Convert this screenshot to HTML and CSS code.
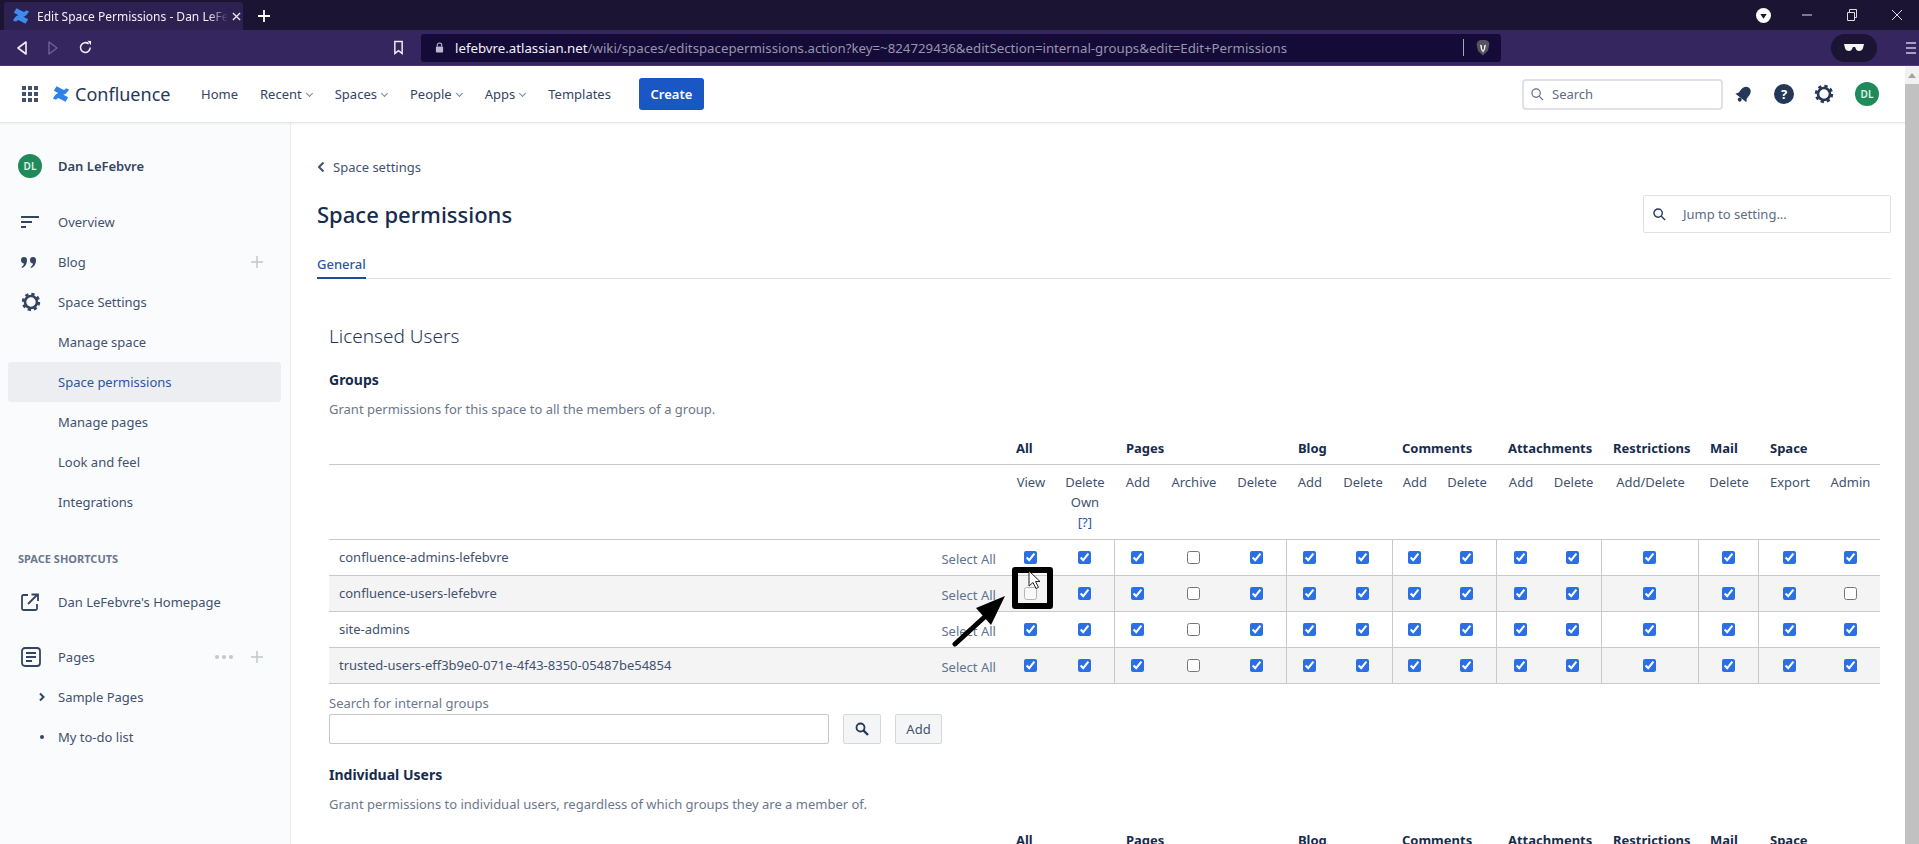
FILE: index.html
```html
<!DOCTYPE html>
<html lang="en">

<head>
    <meta charset="UTF-8">
    <title>Edit Space Permissions - Dan LeFebvre - Confluence</title>
    <link rel="stylesheet" href="styles.css">
</head>

<body>
    <!-- browser chrome -->
    <div class="tabstrip">
        <div class="tab">
            <svg class="tab-logo" viewBox="0 0 20 20" width="18" height="18"><path fill="#3d8bf0" d="M1 15c3-5 6-7 9-5.500l8 4-3 5-7-3.500c-1.500-.7-2.500-.2-3.500 1.500zM19 5c-3 5-6 7-9 5.500l-8-4 3-5 7 3.500c1.500.7 2.500.2 3.500-1.500z"/></svg>
            <span class="tab-title">Edit Space Permissions - Dan LeFe</span>
            <svg class="tab-close" viewBox="0 0 10 10" width="9" height="9"><path d="M1 1l8 8M9 1l-8 8" stroke="#e8e6ee" stroke-width="1.500"/></svg>
        </div>
        <svg class="new-tab" viewBox="0 0 12 12" width="12" height="12"><path d="M6 0v12M0 6h12" stroke="#fff" stroke-width="1.800"/></svg>
        <svg class="win-menu" viewBox="0 0 14 14" width="15" height="15"><circle cx="7" cy="7" r="7" fill="#fff"/><path d="M4 5.500h6L7 10z" fill="#1b1433"/></svg>
        <svg class="win-btn" viewBox="0 0 12 12" width="12" height="12"><path d="M1 6h10" stroke="#ddd" stroke-width="1"/></svg>
        <svg class="win-btn" viewBox="0 0 12 12" width="12" height="12"><path d="M1.500 3.500h7v8h-7zM3.500 3V.5h7v8H9" fill="none" stroke="#ddd" stroke-width="1"/></svg>
        <svg class="win-btn" viewBox="0 0 12 12" width="12" height="12"><path d="M1 1l10 10M11 1L1 11" stroke="#ddd" stroke-width="1"/></svg>
    </div>
    <div class="toolbar">
        <svg class="tool-btn" viewBox="0 0 12 16" width="12" height="16"><path d="M10 2L2 8l8 6z" fill="none" stroke="#f0eef6" stroke-width="1.600" stroke-linejoin="round"/></svg>
        <svg class="tool-btn dim" viewBox="0 0 12 16" width="12" height="16"><path d="M2 2l8 6-8 6z" fill="none" stroke="#6f6494" stroke-width="1.400" stroke-linejoin="round"/></svg>
        <svg class="tool-btn" viewBox="0 0 16 16" width="15" height="15"><path d="M13 8a5.200 5.200 0 1 1-1.700-3.800" fill="none" stroke="#f0eef6" stroke-width="1.700"/><path d="M10 .8l4 .2-.2 4.500z" fill="#f0eef6"/></svg>
        <svg class="bookmark" viewBox="0 0 12 16" width="11" height="15"><path d="M2 1.500h8v13l-4-3-4 3z" fill="none" stroke="#f0eef6" stroke-width="1.600"/></svg>
        <div class="urlbar">
            <svg viewBox="0 0 10 12" width="9" height="11"><path d="M2.500 5V3.500a2.500 2.500 0 0 1 5 0V5" fill="none" stroke="#bdb8cc" stroke-width="1.200"/><rect x="1" y="5" width="8" height="6.500" rx="1" fill="#bdb8cc"/></svg>
            <span class="url"><b>lefebvre.atlassian.net</b>/wiki/spaces/editspacepermissions.action?key=~824729436&amp;editSection=internal-groups&amp;edit=Edit+Permissions</span>
            <i class="url-sep"></i>
            <svg viewBox="0 0 14 16" width="14" height="17"><path d="M2 1.500L4.500.5h5l2.500 1 1.500 2.500-1.500 7L7 16l-5-4.500-1.500-7z" fill="#56535f"/><path d="M4 5l2 1v3L7 11l1-2V6l2-1-1 5-2 3-2-3z" fill="#f1eff6"/></svg>
        </div>
        <div class="private-pill">
            <svg viewBox="0 0 22 10" width="22" height="10"><path d="M1 1h20l-1 4c-.6 3-4.500 4-6.500 2L12 4h-2L8.500 7c-2 2-6 1-6.500-2z" fill="#f5f5f7"/></svg>
        </div>
        <svg class="menu-btn" viewBox="0 0 12 14" width="12" height="14"><path d="M1 2h10M1 7h10M1 12h10" stroke="#cfc8e4" stroke-width="1.700"/></svg>
    </div>

    <div class="page">
        <div class="content-wrap">
            <!-- confluence top bar -->
            <header class="topnav">
                <svg class="app-grid" viewBox="0 0 16 16" width="16" height="16"><g fill="#42526e"><rect width="4" height="4"/><rect x="6" width="4" height="4"/><rect x="12" width="4" height="4"/><rect y="6" width="4" height="4"/><rect x="6" y="6" width="4" height="4"/><rect x="12" y="6" width="4" height="4"/><rect y="12" width="4" height="4"/><rect x="6" y="12" width="4" height="4"/><rect x="12" y="12" width="4" height="4"/></g></svg>
                <svg class="logo" viewBox="0 0 20 20" width="18" height="18"><path fill="#2f80e8" d="M1 15c3-5 6-7 9-5.500l8 4-3 5-7-3.500c-1.500-.7-2.500-.2-3.500 1.500zM19 5c-3 5-6 7-9 5.500l-8-4 3-5 7 3.500c1.500.7 2.500.2 3.500-1.500z"/></svg>
                <span class="brand">Confluence</span>
                <nav class="nav-links">
                    <a>Home</a>
                    <a>Recent <i class="caret"></i></a>
                    <a>Spaces <i class="caret"></i></a>
                    <a>People <i class="caret"></i></a>
                    <a>Apps <i class="caret"></i></a>
                    <a>Templates</a>
                </nav>
                <button class="create-btn">Create</button>
                <div class="top-search">
                    <svg viewBox="0 0 14 14" width="13" height="13"><circle cx="5.500" cy="5.500" r="4.500" fill="none" stroke="#5e6c84" stroke-width="1.300"/><path d="M9 9l4 4" stroke="#5e6c84" stroke-width="1.300"/></svg>
                    <span>Search</span>
                </div>
                <svg class="top-icon bell" viewBox="0 0 18 18" width="18" height="18"><g transform="rotate(38 9 9)" fill="#253858"><path d="M9 1C6 1 4 3.500 4 7v4l-2 3h14l-2-3V7c0-3.500-2-6-5-6z"/><circle cx="9" cy="16" r="2"/></g></svg>
                <span class="top-icon help">?</span>
                <svg class="top-icon" viewBox="0 0 20 20" width="20" height="20"><circle cx="10" cy="10" r="6" fill="none" stroke="#253858" stroke-width="2.600"/><circle cx="10" cy="10" r="8" fill="none" stroke="#253858" stroke-width="2.400" stroke-dasharray="3.300 3"/></svg>
                <span class="avatar">DL</span>
            </header>

            <div class="columns">
                <aside class="sidebar">
                    <div class="space-head">
                        <span class="avatar">DL</span>
                        <span>Dan LeFebvre</span>
                    </div>
                    <ul class="side-nav">
                        <li class="first">
                            <svg viewBox="0 0 18 12" width="18" height="12"><path d="M0 1h18M0 6h11M0 11h5" stroke="#344563" stroke-width="2"/></svg>
                            Overview
                        </li>
                        <li>
                            <svg viewBox="0 0 16 12" width="16" height="13"><path fill="#344563" d="M0 3.500a3 3 0 1 1 6 0c0 4-2 7-5 8l-.5-1c1.500-1 2.300-2 2.500-3.500-1.800 0-3-1.500-3-3.500zM9 3.500a3 3 0 1 1 6 0c0 4-2 7-5 8l-.5-1c1.500-1 2.300-2 2.500-3.500-1.800 0-3-1.500-3-3.500z"/></svg>
                            Blog
                            <svg class="side-plus" viewBox="0 0 12 12" width="12" height="12"><path d="M6 0v12M0 6h12" stroke="#c1c7d0" stroke-width="1.500"/></svg>
                        </li>
                        <li>
                            <svg viewBox="0 0 20 20" width="20" height="20"><circle cx="10" cy="10" r="6" fill="none" stroke="#344563" stroke-width="2.600"/><circle cx="10" cy="10" r="8" fill="none" stroke="#344563" stroke-width="2.400" stroke-dasharray="3.300 3"/></svg>
                            Space Settings
                        </li>
                        <li>Manage space</li>
                        <li class="current">Space permissions</li>
                        <li>Manage pages</li>
                        <li>Look and feel</li>
                        <li>Integrations</li>
                    </ul>
                    <h4 class="side-title">SPACE SHORTCUTS</h4>
                    <ul class="side-nav">
                        <li>
                            <svg viewBox="0 0 18 18" width="18" height="18"><path d="M7 2H2.500A1.500 1.500 0 0 0 1 3.500v12A1.500 1.500 0 0 0 2.500 17h12a1.500 1.500 0 0 0 1.500-1.500V11" fill="none" stroke="#344563" stroke-width="1.800"/><path d="M7 11l9-9M10.500 1.500H17V8" fill="none" stroke="#344563" stroke-width="1.800"/></svg>
                            Dan LeFebvre's Homepage
                        </li>
                        <li class="pages">
                            <svg viewBox="0 0 20 20" width="20" height="20"><rect x="1" y="1" width="18" height="18" rx="3" fill="none" stroke="#344563" stroke-width="1.800"/><path d="M5 6h10M5 10h10M5 14h6" stroke="#344563" stroke-width="1.800"/></svg>
                            Pages
                            <span class="side-dots"><i></i><i></i><i></i></span>
                            <svg class="side-plus" viewBox="0 0 12 12" width="12" height="12"><path d="M6 0v12M0 6h12" stroke="#c1c7d0" stroke-width="1.500"/></svg>
                        </li>
                        <li>
                            <svg class="tree-mark" viewBox="0 0 8 10" width="8" height="10"><path d="M2 1.500L5.500 5 2 8.500" fill="none" stroke="#344563" stroke-width="2"/></svg>
                            Sample Pages
                        </li>
                        <li>
                            <svg class="tree-mark" viewBox="0 0 8 10" width="8" height="10"><circle cx="4" cy="5" r="2" fill="#344563"/></svg>
                            My to-do list
                        </li>
                    </ul>
                </aside>

                <main class="main">
                    <div class="crumb">
                        <svg viewBox="0 0 8 12" width="8" height="12"><path d="M6.500 1.500L2 6l4.500 4.500" fill="none" stroke="#42526e" stroke-width="2"/></svg>
                        Space settings
                    </div>
                    <div class="title-row">
                        <h1>Space permissions</h1>
                        <div class="jump">
                            <svg viewBox="0 0 14 14" width="13" height="13"><circle cx="5.500" cy="5.500" r="4.500" fill="none" stroke="#253858" stroke-width="1.500"/><path d="M9 9l4 4" stroke="#253858" stroke-width="1.500"/></svg>
                            <span>Jump to setting...</span>
                        </div>
                    </div>
                    <div class="tabs"><span class="tab-link">General</span></div>

                    <section class="perms">
                        <h2>Licensed Users</h2>
                        <h3>Groups</h3>
                        <p class="hint">Grant permissions for this space to all the members of a group.</p>

                        <table class="perm-table">
                            <colgroup>
                                <col class="c-name"><col class="c-select">
                                <col class="w48"><col class="w60">
                                <col class="w46"><col class="w66"><col class="w60">
                                <col class="w46"><col class="w60">
                                <col class="w44"><col class="w60">
                                <col class="w48"><col class="w57">
                                <col class="w97">
                                <col class="w60">
                                <col class="w62"><col class="w59">
                            </colgroup>
                            <thead>
                                <tr class="group-row">
                                    <th colspan="2"></th>
                                    <th colspan="2" class="g-all">All</th>
                                    <th colspan="3">Pages</th>
                                    <th colspan="2">Blog</th>
                                    <th colspan="2" class="g-comments">Comments</th>
                                    <th colspan="2">Attachments</th>
                                    <th>Restrictions</th>
                                    <th>Mail</th>
                                    <th colspan="2">Space</th>
                                </tr>
                                <tr class="action-row">
                                    <th colspan="2"></th>
                                    <th>View</th>
                                    <th>Delete Own <a class="help-link">[?]</a></th>
                                    <th>Add</th>
                                    <th>Archive</th>
                                    <th>Delete</th>
                                    <th>Add</th>
                                    <th>Delete</th>
                                    <th>Add</th>
                                    <th>Delete</th>
                                    <th>Add</th>
                                    <th>Delete</th>
                                    <th>Add/Delete</th>
                                    <th>Delete</th>
                                    <th>Export</th>
                                    <th>Admin</th>
                                </tr>
                            </thead>
                            <tbody>
                                <tr>
                                    <td class="name">confluence-admins-lefebvre</td>
                                    <td class="select-all">Select All</td>
                                    <td><input type="checkbox" checked></td>
                                    <td class="end"><input type="checkbox" checked></td>
                                    <td><input type="checkbox" checked></td>
                                    <td><input type="checkbox"></td>
                                    <td class="end"><input type="checkbox" checked></td>
                                    <td><input type="checkbox" checked></td>
                                    <td class="end"><input type="checkbox" checked></td>
                                    <td><input type="checkbox" checked></td>
                                    <td class="end"><input type="checkbox" checked></td>
                                    <td><input type="checkbox" checked></td>
                                    <td class="end"><input type="checkbox" checked></td>
                                    <td class="end"><input type="checkbox" checked></td>
                                    <td class="end"><input type="checkbox" checked></td>
                                    <td><input type="checkbox" checked></td>
                                    <td><input type="checkbox" checked></td>
                                </tr>
                                <tr>
                                    <td class="name">confluence-users-lefebvre</td>
                                    <td class="select-all">Select All</td>
                                    <td><input class="fading" type="checkbox"></td>
                                    <td class="end"><input type="checkbox" checked></td>
                                    <td><input type="checkbox" checked></td>
                                    <td><input type="checkbox"></td>
                                    <td class="end"><input type="checkbox" checked></td>
                                    <td><input type="checkbox" checked></td>
                                    <td class="end"><input type="checkbox" checked></td>
                                    <td><input type="checkbox" checked></td>
                                    <td class="end"><input type="checkbox" checked></td>
                                    <td><input type="checkbox" checked></td>
                                    <td class="end"><input type="checkbox" checked></td>
                                    <td class="end"><input type="checkbox" checked></td>
                                    <td class="end"><input type="checkbox" checked></td>
                                    <td><input type="checkbox" checked></td>
                                    <td><input type="checkbox"></td>
                                </tr>
                                <tr>
                                    <td class="name">site-admins</td>
                                    <td class="select-all">Select All</td>
                                    <td><input type="checkbox" checked></td>
                                    <td class="end"><input type="checkbox" checked></td>
                                    <td><input type="checkbox" checked></td>
                                    <td><input type="checkbox"></td>
                                    <td class="end"><input type="checkbox" checked></td>
                                    <td><input type="checkbox" checked></td>
                                    <td class="end"><input type="checkbox" checked></td>
                                    <td><input type="checkbox" checked></td>
                                    <td class="end"><input type="checkbox" checked></td>
                                    <td><input type="checkbox" checked></td>
                                    <td class="end"><input type="checkbox" checked></td>
                                    <td class="end"><input type="checkbox" checked></td>
                                    <td class="end"><input type="checkbox" checked></td>
                                    <td><input type="checkbox" checked></td>
                                    <td><input type="checkbox" checked></td>
                                </tr>
                                <tr>
                                    <td class="name">trusted-users-eff3b9e0-071e-4f43-8350-05487be54854</td>
                                    <td class="select-all">Select All</td>
                                    <td><input type="checkbox" checked></td>
                                    <td class="end"><input type="checkbox" checked></td>
                                    <td><input type="checkbox" checked></td>
                                    <td><input type="checkbox"></td>
                                    <td class="end"><input type="checkbox" checked></td>
                                    <td><input type="checkbox" checked></td>
                                    <td class="end"><input type="checkbox" checked></td>
                                    <td><input type="checkbox" checked></td>
                                    <td class="end"><input type="checkbox" checked></td>
                                    <td><input type="checkbox" checked></td>
                                    <td class="end"><input type="checkbox" checked></td>
                                    <td class="end"><input type="checkbox" checked></td>
                                    <td class="end"><input type="checkbox" checked></td>
                                    <td><input type="checkbox" checked></td>
                                    <td><input type="checkbox" checked></td>
                                </tr>
                            </tbody>
                        </table>

                        <label class="search-label">Search for internal groups</label>
                        <div class="search-row">
                            <input class="group-input" type="text">
                            <button class="icon-btn"><svg viewBox="0 0 14 14" width="14" height="14"><circle cx="5.500" cy="5.500" r="4" fill="none" stroke="#253858" stroke-width="1.800"/><path d="M8.500 8.500L13 13" stroke="#253858" stroke-width="2.400"/></svg></button>
                            <button class="add-btn">Add</button>
                        </div>

                        <h3 class="individual">Individual Users</h3>
                        <p class="hint">Grant permissions to individual users, regardless of which groups they are a member of.</p>

                        <table class="perm-table users-table">
                            <colgroup>
                                <col class="c-name"><col class="c-select">
                                <col class="w48"><col class="w60">
                                <col class="w46"><col class="w66"><col class="w60">
                                <col class="w46"><col class="w60">
                                <col class="w44"><col class="w60">
                                <col class="w48"><col class="w57">
                                <col class="w97">
                                <col class="w60">
                                <col class="w62"><col class="w59">
                            </colgroup>
                            <thead>
                                <tr class="group-row">
                                    <th colspan="2"></th>
                                    <th colspan="2" class="g-all">All</th>
                                    <th colspan="3">Pages</th>
                                    <th colspan="2">Blog</th>
                                    <th colspan="2" class="g-comments">Comments</th>
                                    <th colspan="2">Attachments</th>
                                    <th>Restrictions</th>
                                    <th>Mail</th>
                                    <th colspan="2">Space</th>
                                </tr>
                            </thead>
                        </table>
                    </section>
                </main>
            </div>
        </div>

        <div class="scrollbar">
            <i class="scroll-up"></i>
            <div class="scroll-thumb"></div>
        </div>

        <!-- tutorial annotation drawn over the table -->
        <div class="callout-box"></div>
        <svg class="callout-arrow" viewBox="0 0 60 56" width="60" height="56"><path d="M3 52L38 20" stroke="#000" stroke-width="5" stroke-linecap="round"/><path d="M53 4L24 16l15 17z" fill="#000"/></svg>
        <svg class="cursor" viewBox="0 0 14 20" width="14" height="20"><path d="M1 1v15l4-3.500 3 6 2.500-1.200-3-5.800H12z" fill="#fff" stroke="#222" stroke-width="1"/></svg>
    </div>
</body>

</html>
```

FILE: styles.css
```css
* {
    box-sizing: border-box;
}

html,
body {
    margin: 0;
    height: 844px;
    overflow: hidden;
}

body {
    font-family: "Noto Sans", Arial, sans-serif;
    font-size: 13px;
    color: #42526e;
    background-color: #fff;
}

/* browser chrome */
.tabstrip {
    height: 30px;
    background-color: #1b1433;
    display: flex;
    align-items: flex-end;
    padding: 0 16px 0 4px;
}

.tab {
    width: 239px;
    height: 28px;
    background-color: #2c2150;
    border-radius: 3px 3px 0 0;
    display: flex;
    align-items: center;
    padding: 0 9px 0 8px;
    color: #f0eef6;
    font-size: 12px;
}

.tab-logo {
    flex: none;
}

.tab-title {
    flex: 1;
    margin-left: 7px;
    white-space: nowrap;
    -webkit-mask-image: linear-gradient(to right, #000 90%, transparent);
    mask-image: linear-gradient(to right, #000 90%, transparent);
}

.tab-close {
    flex: none;
    margin-left: 4px;
}

.new-tab {
    margin: 0 0 8px 15px;
}

.win-menu {
    margin: 0 0 7px auto;
}

.win-btn {
    margin: 0 0 9px 33px;
}

.win-menu + .win-btn {
    margin-left: 30px;
}

.toolbar {
    height: 36px;
    background-color: #35265f;
    border-bottom: 1px solid #4a3d6b;
    display: flex;
    align-items: center;
    padding-left: 16px;
}

.tool-btn {
    margin-right: 19px;
}

.bookmark {
    margin-left: 281px;
}

.urlbar {
    margin-left: 17px;
    width: 1080px;
    height: 28px;
    background-color: #150b38;
    border-radius: 3px;
    display: flex;
    align-items: center;
    padding: 0 11px 0 14px;
}

.url {
    flex: 1;
    margin-left: 11px;
    font-size: 13.25px;
    color: #9a94ad;
    white-space: nowrap;
}

.url b {
    font-weight: 400;
    color: #f2f0f7;
}

.url-sep {
    width: 1px;
    height: 17px;
    background-color: #a9a4b8;
    margin-right: 12px;
}

.private-pill {
    margin-left: 330px;
    width: 46px;
    height: 28px;
    border-radius: 14px;
    background-color: #1b1433;
    display: flex;
    align-items: center;
    justify-content: center;
}

.menu-btn {
    margin-left: 28px;
}

/* page */
.page {
    position: relative;
    display: flex;
    height: 778px;
}

.content-wrap {
    flex: 1;
    min-width: 0;
    display: flex;
    flex-direction: column;
}

.topnav {
    height: 57px;
    flex: none;
    border-bottom: 1px solid #e4e6ea;
    box-shadow: 0 1px 2px rgba(9, 30, 66, 0.06);
    display: flex;
    align-items: center;
    padding: 0 26px 0 22px;
    position: relative;
}

.logo {
    margin-left: 14px;
}

.brand {
    margin-left: 5px;
    font-size: 18px;
    color: #253858;
    width: 126px;
}

.nav-links {
    display: flex;
    gap: 22px;
    font-size: 13px;
    color: #344563;
}

.nav-links a {
    display: inline-flex;
    align-items: center;
    gap: 3px;
}

.caret {
    width: 5px;
    height: 5px;
    margin: -2px 1px 0 2px;
    border-right: 1px solid #7a869a;
    border-bottom: 1px solid #7a869a;
    transform: rotate(45deg);
}

.create-btn {
    margin-left: 28px;
    width: 65px;
    height: 32px;
    border: 0;
    border-radius: 3px;
    background-color: #1a56c4;
    color: #fff;
    font-family: inherit;
    font-size: 13px;
    font-weight: 600;
}

.top-search {
    margin-left: auto;
    width: 201px;
    height: 31px;
    border: 2px solid #dfe1e6;
    border-radius: 4px;
    display: flex;
    align-items: center;
    gap: 8px;
    padding-left: 7px;
    color: #5e6c84;
    font-size: 13px;
}

.top-icon {
    margin-left: 15px;
    flex: none;
}

.bell {
    margin-left: 12px;
}

.help {
    width: 20px;
    height: 20px;
    border-radius: 50%;
    background-color: #253858;
    color: #fff;
    font-size: 13px;
    font-weight: 700;
    line-height: 20px;
    text-align: center;
    margin-left: 21px;
}

.help + .top-icon {
    margin-left: 20px;
}

.avatar {
    width: 24px;
    height: 24px;
    flex: none;
    border-radius: 50%;
    background-color: #218a5b;
    color: #dff3ea;
    font-size: 10px;
    font-weight: 600;
    line-height: 24px;
    text-align: center;
}

.top-icon + .avatar {
    margin-left: 21px;
}

.columns {
    flex: 1;
    display: flex;
    min-height: 0;
}

/* left sidebar */
.sidebar {
    width: 291px;
    flex: none;
    background-color: #fafbfd;
    border-right: 1px solid #e9ebee;
    padding: 31px 9px 0 8px;
}

.space-head {
    display: flex;
    align-items: center;
    gap: 16px;
    padding-left: 10px;
    height: 24px;
    font-weight: 600;
    color: #344563;
}

.side-nav {
    list-style: none;
    margin: 0;
    padding: 0;
}

.side-nav li {
    height: 40px;
    display: flex;
    align-items: center;
    padding-left: 50px;
    position: relative;
}

.side-nav li > svg:first-child {
    position: absolute;
    left: 13px;
}

.side-nav li.first {
    margin-top: 24px;
}

.side-nav li.current {
    background-color: #eceef2;
    color: #2a56a8;
    border-radius: 3px;
}

.side-nav li.pages {
    margin-top: 15px;
}

.side-nav li > svg.tree-mark {
    left: 30px;
}

.side-plus {
    position: absolute;
    right: 18px;
}

.side-dots {
    position: absolute;
    right: 48px;
    display: flex;
    gap: 3px;
}

.side-dots i {
    width: 4px;
    height: 4px;
    border-radius: 50%;
    background-color: #c1c7d0;
}

.side-title {
    margin: 30px 0 16px 10px;
    font-size: 11px;
    line-height: 14px;
    font-weight: 700;
    color: #6b778c;
}

/* main content */
.main {
    flex: 1;
    min-width: 0;
    padding: 34px 14px 0 26px;
    overflow: hidden;
}

.crumb {
    display: flex;
    align-items: center;
    gap: 8px;
    height: 20px;
    color: #42526e;
}

.title-row {
    display: flex;
    align-items: center;
    justify-content: space-between;
    margin-top: 17px;
    height: 40px;
}

h1 {
    margin: 0;
    font-size: 22px;
    font-weight: 500;
    color: #172b4d;
}

.jump {
    width: 248px;
    height: 38px;
    border: 1px solid #dfe1e6;
    border-radius: 2px;
    display: flex;
    align-items: center;
    gap: 17px;
    padding-left: 9px;
    color: #5e6c84;
}

.tabs {
    margin-top: 15px;
    height: 30px;
    border-bottom: 1px solid #dfe1e6;
    display: flex;
}

.tab-link {
    height: 30px;
    line-height: 22px;
    padding-top: 4px;
    border-bottom: 2px solid #1d4b9f;
    color: #2a56a8;
    font-weight: 500;
}

.perms {
    padding: 0 11px 0 12px;
}

h2 {
    margin: 44px 0 0;
    font-size: 19px;
    line-height: 26px;
    font-weight: 300;
    color: #253858;
}

h3 {
    margin: 21px 0 0;
    font-size: 14px;
    line-height: 20px;
    font-weight: 700;
    color: #172b4d;
}

.hint {
    margin: 9px 0 0;
    line-height: 20px;
    color: #6b778c;
}

.perm-table {
    width: 1551px;
    table-layout: fixed;
    border-collapse: separate;
    border-spacing: 0;
    margin-top: 19px;
}

.users-table {
    margin-top: 16px;
}

.c-select {
    width: 78px;
}

.w44 { width: 44px; }
.w46 { width: 46px; }
.w48 { width: 48px; }
.w57 { width: 57px; }
.w59 { width: 59px; }
.w60 { width: 60px; }
.w62 { width: 62px; }
.w66 { width: 66px; }
.w97 { width: 97px; }

.group-row th {
    height: 27px;
    text-align: left;
    vertical-align: top;
    padding: 0 0 0 11px;
    font-weight: 700;
    line-height: 20px;
    color: #172b4d;
    border-bottom: 1px solid #c9c9c9;
    white-space: nowrap;
}

.group-row .g-all {
    padding-left: 9px;
}

.group-row .g-comments {
    padding-left: 9px;
}

.action-row th {
    height: 75px;
    vertical-align: top;
    padding: 7px 0 0;
    font-weight: 400;
    line-height: 20px;
    color: #42526e;
    border-bottom: 1px solid #c9c9c9;
}

.help-link {
    display: block;
    color: #2a56a8;
}

tbody td {
    height: 36px;
    padding: 0 0 4px;
    text-align: center;
    border-bottom: 1px solid #c9c9c9;
}

tbody td.end {
    border-right: 1px solid #c9c9c9;
}

tbody tr:nth-child(even) td {
    background-color: #f4f4f4;
}

input[type="checkbox"] {
    margin: 0;
    width: 13px;
    height: 13px;
    vertical-align: middle;
    accent-color: #2b6fe6;
}

input.fading {
    opacity: 0.5;
}

td.name {
    text-align: left;
    padding: 0 0 1px 10px;
    color: #42526e;
    white-space: nowrap;
}

td.select-all {
    text-align: right;
    padding: 2px 11px 0 0;
    color: #5e7390;
    white-space: nowrap;
}

.search-label {
    display: block;
    margin-top: 10px;
    line-height: 18px;
    color: #6b778c;
}

.search-row {
    display: flex;
    align-items: center;
    margin-top: 2px;
}

.group-input {
    width: 500px;
    height: 30px;
    border: 1px solid #c4c7cc;
    border-radius: 2px;
    background-color: #fff;
}

.icon-btn,
.add-btn {
    height: 30px;
    border: 1px solid #d5d7da;
    border-radius: 2px;
    background-color: #f4f5f7;
    font-family: inherit;
    font-size: 13px;
    color: #42526e;
    padding: 0;
}

.icon-btn {
    width: 38px;
    margin-left: 14px;
}

.icon-btn svg {
    display: block;
    margin: 0 auto;
}

.add-btn {
    width: 47px;
    margin-left: 14px;
}

h3.individual {
    margin-top: 21px;
}

/* scrollbar */
.scrollbar {
    width: 14px;
    flex: none;
    background-color: #f1f1f1;
    position: relative;
}

.scroll-up {
    position: absolute;
    top: 7px;
    left: 3px;
    border-left: 4px solid transparent;
    border-right: 4px solid transparent;
    border-bottom: 5px solid #a3a3a3;
}

.scroll-thumb {
    position: absolute;
    top: 18px;
    left: 0;
    right: 0;
    bottom: 0;
    background-color: #c1c1c1;
}

/* annotation overlay */
.callout-box {
    position: absolute;
    left: 1012px;
    top: 501px;
    width: 41px;
    height: 42px;
    border: 6px solid #000;
    border-radius: 3px;
}

.callout-arrow {
    position: absolute;
    left: 952px;
    top: 526px;
}

.cursor {
    position: absolute;
    left: 1028px;
    top: 504px;
}
```
